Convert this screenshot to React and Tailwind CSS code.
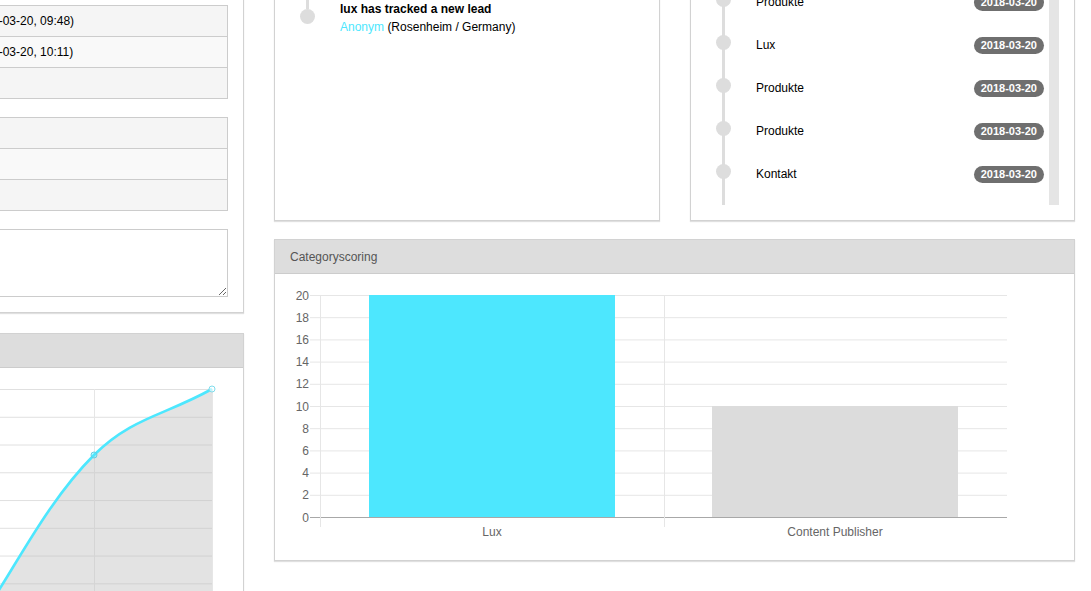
import React from "react";

const CYAN = "#4de7fe";

function Card({ title, children, className = "", bodyClass = "" }) {
  return (
    <div className={`bg-white border border-[#d2d2d2] shadow-[0_1px_1px_rgba(0,0,0,0.12)] ${className}`}>
      <div className="h-[34px] border-b border-[#cccccc] bg-[#dddddd] px-[15px] flex items-center text-[12px] text-[#555555] whitespace-nowrap overflow-hidden">
        {title}
      </div>
      <div className={`p-[15px] ${bodyClass}`}>{children}</div>
    </div>
  );
}

function InfoTable({ rows }) {
  return (
    <div className="border-x border-b border-[#cccccc] mb-[18px]">
      {rows.map((r, i) => (
        <div
          key={i}
          className={`flex h-[31px] items-center px-[5px] text-[12px] leading-[20px] whitespace-nowrap border-t border-[#cccccc] ${
            i % 2 === 0 ? "bg-[#f5f5f5]" : "bg-[#f9f9f9]"
          }`}
        >
          <span className="w-[87px] shrink-0">{r[0]}</span>
          <span>{r[1]}</span>
        </div>
      ))}
    </div>
  );
}

function MidItem({ top, bottom, title, sub }) {
  return (
    <div className="flex">
      <div className="w-[35px] shrink-0 flex flex-col items-center">
        <div className={`w-[3px] flex-1 ${top ? "bg-[#dddddd]" : ""}`} />
        <div className="size-[15px] rounded-full bg-[#dddddd] shrink-0" />
        <div className={`w-[3px] flex-1 ${bottom ? "bg-[#dddddd]" : ""}`} />
      </div>
      <div className="pl-[15px] pt-[6px] pb-[1px] text-[12px] text-black">
        <div className="font-bold leading-[17px]">{title}</div>
        <div className="leading-[17px] pt-[1px]">
          <span className="text-[#4de7fe]">Anonym</span> {sub}
        </div>
      </div>
    </div>
  );
}

function PageItem({ label }) {
  return (
    <div className="h-[43px] flex items-center">
      <div className="ml-[10px] size-[15px] rounded-full bg-[#dddddd] shrink-0" />
      <div className="flex-1 flex items-center pt-[6px] pl-[25px] pr-[5px]">
        <span className="flex-1 text-[12px] leading-[17px] text-black">{label}</span>
        <span className="rounded-full bg-[#6f6f6f] text-white font-bold text-[11px] h-[17px] leading-[17px] px-[7px]">
          2018-03-20
        </span>
      </div>
    </div>
  );
}

function BarChart() {
  const ticks = [20, 18, 16, 14, 12, 10, 8, 6, 4, 2, 0];
  const y = (v) => 228 - v * 11.1;
  return (
    <svg width="769" height="256" className="block" style={{ fontFamily: "'Liberation Sans', Arial, sans-serif" }}>
      {ticks.map((v) => (
        <line
          key={v}
          x1="20"
          x2="717"
          y1={y(v) + 0.5}
          y2={y(v) + 0.5}
          stroke={v === 0 ? "#a8a8a8" : "#e6e6e6"}
          strokeWidth="1"
        />
      ))}
      <line x1="30.5" x2="30.5" y1="6" y2="238" stroke="#e6e6e6" />
      <line x1="374.5" x2="374.5" y1="6" y2="238" stroke="#e6e6e6" />
      {ticks.map((v) => (
        <text key={"t" + v} x="19" y={y(v) + 4.5} textAnchor="end" fontSize="12" fill="#666666">
          {v}
        </text>
      ))}
      <rect x="79" y="6" width="246" height="222" fill={CYAN} />
      <rect x="422" y="117" width="246" height="111" fill="#dcdcdc" />
      <text x="202" y="247" textAnchor="middle" fontSize="12" fill="#666666">
        Lux
      </text>
      <text x="545" y="247" textAnchor="middle" fontSize="12" fill="#666666">
        Content Publisher
      </text>
    </svg>
  );
}

function LineChart() {
  const rows = [0, 1, 2, 3, 4, 5, 6, 7];
  const curve = "M101 237 C125 217 161.9 129.1 219 72 C256.3 34.7 289.8 32.4 337 6";
  return (
    <svg width="353" height="215" className="block">
      {rows.map((k) => (
        <line key={k} x1="0" x2="337" y1={6.5 + k * 27.76} y2={6.5 + k * 27.76} stroke="#e0e0e0" />
      ))}
      <line x1="101.5" x2="101.5" y1="6" y2="215" stroke="#e6e6e6" />
      <line x1="219.5" x2="219.5" y1="6" y2="215" stroke="#e6e6e6" />
      <line x1="337.5" x2="337.5" y1="6" y2="215" stroke="#e6e6e6" />
      <path d={curve + " L337 215 L101 215 Z"} fill="rgba(190,190,190,0.43)" />
      <path d={curve} fill="none" stroke={CYAN} strokeWidth="2.6" />
      <circle cx="219" cy="72" r="3" fill="rgba(77,231,254,0.35)" stroke="#63cfe3" strokeWidth="1" />
      <circle cx="337" cy="6" r="3" fill="rgba(255,255,255,0.6)" stroke="#7fdcec" strokeWidth="1" />
    </svg>
  );
}

export default function App() {
  return (
    <div className="w-[1091px] h-[591px] overflow-hidden bg-white font-['Liberation_Sans',Arial,sans-serif] text-black">
      <div className="flex items-start gap-[30px] -mt-[97px] -ml-[141px]">
        {/* Left column */}
        <div className="w-[385px] shrink-0 flex flex-col gap-[20px]">
          <Card title="Lead">
            <div className="h-[52px] text-[14px] font-bold leading-[34px]">Anonym</div>
            <InfoTable
              rows={[
                ["Erster Besuch", "(2018-03-20, 09:48)"],
                ["Letzter Besuch", "(2018-03-20, 10:11)"],
                ["Besuche", "3"],
              ]}
            />
            <InfoTable
              rows={[
                ["Scoring", "25"],
                ["Seiten", "8"],
                ["E-Mail", "-"],
              ]}
            />
            <textarea className="block w-full h-[68px] border border-[#cccccc] bg-white" />
          </Card>
          <Card title="Scoring">
            <LineChart />
          </Card>
        </div>

        {/* Right area */}
        <div className="w-[801px] shrink-0 grid grid-cols-[386px_385px] gap-x-[30px] gap-y-[18px]">
          <Card title="Activities">
            <MidItem bottom title="lux has tracked a new pagevisit" sub="(Rosenheim / Germany)" />
            <MidItem top title="lux has tracked a new lead" sub="(Rosenheim / Germany)" />
          </Card>
          <Card title="Pagevisits">
            <div className="flex h-[252px] overflow-hidden">
              <div className="flex-1 pt-[25px] bg-[linear-gradient(90deg,transparent_16px,#dddddd_16px,#dddddd_19px,transparent_19px)]">
                <PageItem label="Produkte" />
                <PageItem label="Lux" />
                <PageItem label="Produkte" />
                <PageItem label="Produkte" />
                <PageItem label="Kontakt" />
              </div>
              <div className="w-[10px] bg-[#e5e5e5]" />
            </div>
          </Card>
          <Card title="Categoryscoring" className="col-span-2">
            <BarChart />
          </Card>
        </div>
      </div>
    </div>
  );
}
